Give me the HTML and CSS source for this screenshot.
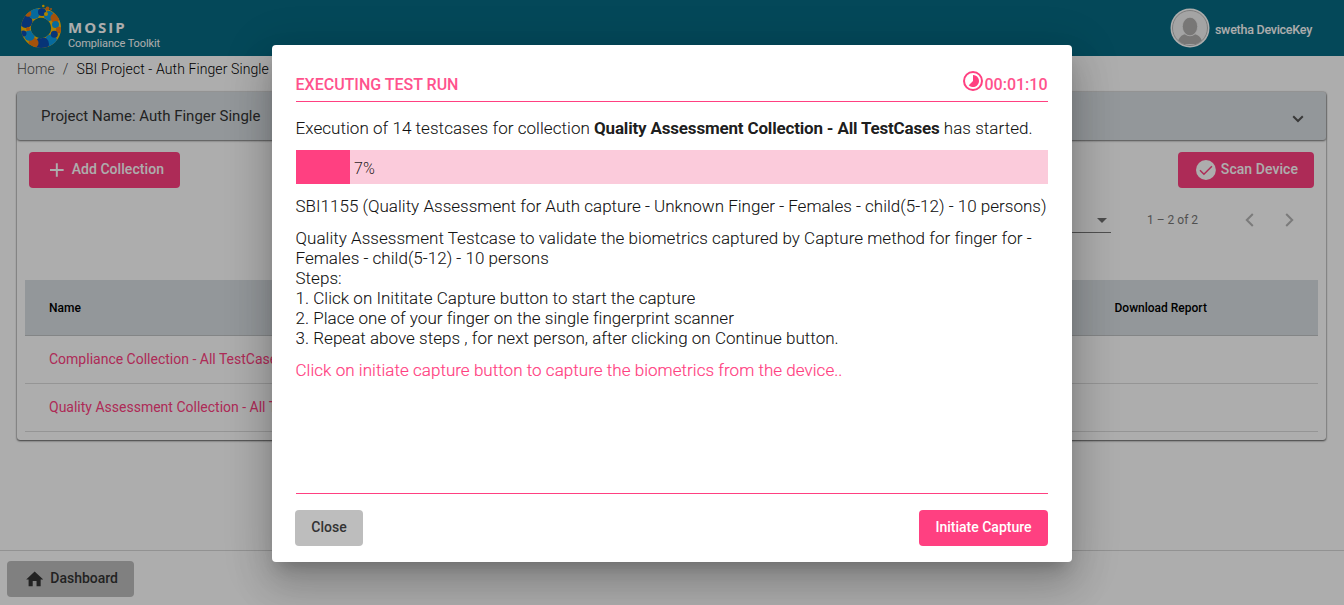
FILE: index.html
```html
<!DOCTYPE html>
<html lang="en">
<head>
<meta charset="utf-8">
<title>Compliance Toolkit</title>
<link rel="stylesheet" href="styles.css">
</head>
<body>
<div class="page">
  <header class="topbar">
    <div class="brand">
      <svg class="logo" width="42" height="46" viewBox="0 0 42 46">
        <defs><clipPath id="ring"><path clip-rule="evenodd" d="M20 4a20 20 0 1 0 .1 0zM20 13.800a10.200 10.200 0 1 1-.1 0z"/></clipPath></defs>
        <g clip-path="url(#ring)">
          <rect width="42" height="46" fill="#ffc000"/>
          <circle cx="5" cy="17.500" r="6.500" fill="#0b4db0"/>
          <circle cx="13" cy="9" r="6" fill="#0a9ce8"/>
          <circle cx="7" cy="9.500" r="3.200" fill="#f47a10"/>
          <circle cx="21" cy="8" r="4" fill="#0b4db0"/>
          <circle cx="28" cy="12" r="5" fill="#0a9ce8"/>
          <circle cx="34" cy="14" r="4.500" fill="#f47a10"/>
          <circle cx="34.500" cy="20.500" r="3.500" fill="#0a9ce8"/>
          <circle cx="30" cy="36.500" r="6" fill="#0a9ce8"/>
          <circle cx="21" cy="40" r="7" fill="#0b4db0"/>
          <circle cx="12.500" cy="39" r="5" fill="#f47a10"/>
          <circle cx="8.500" cy="31.500" r="5.300" fill="#0a9ce8"/>
          <circle cx="2.500" cy="29.500" r="3" fill="#0b4db0"/>
          <circle cx="38" cy="26" r="3.200" fill="#f47a10"/>
          <circle cx="7" cy="25" r="2" fill="#f47a10"/>
        </g>
        <circle cx="33.300" cy="30.300" r="3.500" fill="#0b4db0"/>
        <circle cx="26.500" cy="4.500" r="1.900" fill="#f47a10"/>
        <circle cx="22.300" cy="2" r="1.300" fill="#ffc000"/>
        <circle cx="30" cy="5" r="1" fill="#f47a10"/>
        <circle cx="25" cy="10" r="2" fill="#ffc000"/>
      </svg>
      <div class="brand-text">
        <span class="brand-name">MOSIP</span>
        <span class="brand-sub">Compliance Toolkit</span>
      </div>
    </div>
    <div class="user">
      <svg width="40" height="40" viewBox="0 0 40 40">
        <circle cx="20" cy="20" r="19.500" fill="#fff"/>
        <circle cx="20" cy="20" r="17.500" fill="#f2f2f2" stroke="#aaa" stroke-width=".8"/>
        <path d="M8.200 32.500C10 28 13 26.500 15 26.200c3 2.200 7 2.200 10 0 3 .5 5.500 2.500 6.800 6.300A17 17 0 0 1 26 36H14a17 17 0 0 1-5.800-3.500z" fill="#b2b0ae"/>
        <ellipse cx="20" cy="18.500" rx="7.700" ry="9.300" fill="#b2b0ae" stroke="#f2f2f2" stroke-width=".8"/>
      </svg>
      <span class="user-name">swetha DeviceKey</span>
    </div>
  </header>

  <nav class="crumbs"><a class="crumb-home">Home</a><span class="crumb-sep">/</span><span class="crumb-cur">SBI Project - Auth Finger Single</span></nav>

  <main class="card">
    <div class="panel-head">
      <span class="panel-title">Project Name: Auth Finger Single</span>
      <svg width="12" height="8" viewBox="0 0 12 8"><path d="M1.200 1.200 6 6l4.800-4.800" fill="none" stroke="#555" stroke-width="2"/></svg>
    </div>
    <div class="actions">
      <button class="btn pink add">
        <svg width="14" height="14" viewBox="0 0 14 14"><path d="M7 0v14M0 7h14" stroke="#fff" stroke-width="2"/></svg>
        <span>Add Collection</span>
      </button>
      <button class="btn pink scan">
        <svg width="20" height="20" viewBox="0 0 20 20"><circle cx="10" cy="10" r="10" fill="#fff"/><path d="M4 10.200 8 14.200 16 6.200" fill="none" stroke="#ff4081" stroke-width="1.500"/></svg>
        <span>Scan Device</span>
      </button>
    </div>
    <div class="paginator">
      <div class="page-size"><svg width="10" height="5" viewBox="0 0 10 5"><path d="M0 0h10L5 5z" fill="#707070"/></svg></div>
      <span class="range">1 – 2 of 2</span>
      <svg class="prev" width="9" height="14" viewBox="0 0 9 14"><path d="M7.800 1 1.800 7l6 6" fill="none" stroke="#b5b5b5" stroke-width="2"/></svg>
      <svg class="next" width="9" height="14" viewBox="0 0 9 14"><path d="M1.200 1l6 6-6 6" fill="none" stroke="#b5b5b5" stroke-width="2"/></svg>
    </div>
    <div class="table">
      <div class="thead"><span class="th">Name</span><span class="th">Download Report</span></div>
      <div class="row"><a class="link">Compliance Collection - All TestCases</a></div>
      <div class="row"><a class="link">Quality Assessment Collection - All TestCases</a></div>
    </div>
  </main>

  <footer class="footer">
    <button class="btn gray dash">
      <svg width="18" height="16" viewBox="0 0 18 16"><path d="M7 15.500v-5.300h4v5.300h4.300V8.400h2.500L9 .3.200 8.400h2.500v7.100z" fill="#333"/></svg>
      <span>Dashboard</span>
    </button>
  </footer>
</div>

<div class="overlay">
  <section class="dialog">
    <div class="dlg-head">
      <h1 class="dlg-title">EXECUTING TEST RUN</h1>
      <div class="timer">
        <svg width="20" height="20" viewBox="0 0 20 20"><circle cx="10" cy="10" r="9" fill="none" stroke="#ff4081" stroke-width="2"/><path d="M10 4v6l-4.240 4.240A6 6 0 1 0 10 4z" fill="#ff4081"/></svg>
        <span>00:01:10</span>
      </div>
    </div>
    <div class="dlg-body">
      <p class="text started">Execution of 14 testcases for collection <b>Quality Assessment Collection - All TestCases</b> has started.</p>
      <div class="progress"><div class="fill"></div><span class="pct">7%</span></div>
      <p class="text case">SBI1155 (Quality Assessment for Auth capture - Unknown Finger - Females - child(5-12) - 10 persons)</p>
      <p class="text desc">Quality Assessment Testcase to validate the biometrics captured by Capture method for finger for -<br>Females - child(5-12) - 10 persons<br>Steps:<br>1. Click on Inititate Capture button to start the capture<br>2. Place one of your finger on the single fingerprint scanner<br>3. Repeat above steps , for next person, after clicking on Continue button.</p>
      <p class="text hint">Click on initiate capture button to capture the biometrics from the device..</p>
    </div>
    <div class="dlg-actions">
      <button class="btn gray close">Close</button>
      <button class="btn pink initiate">Initiate Capture</button>
    </div>
  </section>
</div>
</body>
</html>
```
FILE: styles.css
```css
* { box-sizing: border-box; }
body { margin: 0; font-family: Roboto, sans-serif; overflow: hidden; }
.page { height: 605px; display: flex; flex-direction: column; background: #fff; }

.topbar { height: 56px; flex: none; background: #076b83; display: flex; justify-content: space-between; padding: 0 32px 0 21px; color: #fff; }
.brand { display: flex; gap: 5px; padding-top: 4px; }
.brand-text { display: flex; flex-direction: column; padding-top: 15px; }
.brand-name { font: 700 15px/17px "Open Sans", sans-serif; letter-spacing: 2px; }
.brand-sub { font-size: 11px; line-height: 15px; letter-spacing: -.1px; }
.user { display: flex; align-items: center; gap: 5px; }
.user svg { margin: 0 0 0 -1px; }
.user-name { font-size: 12.5px; font-weight: 500; padding-top: 3px; letter-spacing: -.26px; }

.crumbs { height: 36px; flex: none; padding: 5px 17px; font-size: 14px; line-height: 17px; display: flex; font-weight: 300; letter-spacing: .1px; }
.crumb-home { color: #555; }
.crumb-sep { margin: 0 8px; color: #444; }
.crumb-cur { color: #000; }

.card { margin: 0 17px; width: 1309px; height: 348px; flex: none; border-radius: 3px; box-shadow: 0 1px 2px rgba(0,0,0,.6), 0 0 2px rgba(0,0,0,.35); }
.panel-head { height: 48px; padding: 0 22px 0 24px; background: #d9dfe3; border-radius: 3px; display: flex; align-items: center; justify-content: space-between; box-shadow: 0 1px 2px rgba(0,0,0,.55); }
.panel-head svg { margin-top: 5px; }
.panel-title { font-size: 15px; color: #333; }
.actions { display: flex; justify-content: space-between; padding: 12px 12px 0 12px; }

.btn { height: 36px; border: 0; border-radius: 4px; padding: 0 16px; font: 500 14px/34px Roboto, sans-serif; display: flex; align-items: center; white-space: nowrap; }
.btn > span { line-height: 34px; height: 36px; }
.pink { background: #ff4081; color: #fff; }
.gray { background: #bdbdbd; color: #333; }
.add { width: 151px; padding-left: 21px; gap: 8px; letter-spacing: .06px; }
.scan { width: 136px; padding-left: 18px; gap: 5px; letter-spacing: .06px; }

.paginator { height: 92px; display: flex; justify-content: flex-end; padding: 19px 32px 0 0; }
.page-size { width: 60px; height: 26px; border-bottom: 1px solid #777; display: flex; justify-content: flex-end; padding: 11px 4px 0 0; }
.range { margin-left: 36px; width: 98px; font-size: 12px; line-height: 26px; color: #777; }
.prev { margin-top: 6px; }
.next { margin: 6px 0 0 31px; }

.table { margin: 0 8px; }
.thead { height: 56px; background: #d9dfe3; border-bottom: 1px solid #c2c4c6; display: grid; grid-template-columns: 1065.500px 1fr; align-items: center; padding-left: 24px; }
.th { font-size: 12px; font-weight: 500; color: #000; }
.row { height: 48px; border-bottom: 1px solid #dcdcdc; padding: 0 0 2px 24px; display: flex; align-items: center; font-size: 14px; }
.link { color: #ff4081; }

.footer { margin-top: auto; height: 55px; border-top: 1px solid #d8d8d8; padding: 10px 7px; }
.dash { width: 127px; padding-left: 19px; gap: 7px; }

.overlay { position: absolute; inset: 0; background: rgba(0,0,0,.32); display: flex; justify-content: center; padding-top: 45px; }
.dialog { width: 800px; height: 517px; background: #fff; border-radius: 4px; padding: 24px 24px 16px; display: flex; flex-direction: column; box-shadow: 0 11px 15px -7px rgba(0,0,0,.2), 0 24px 38px 3px rgba(0,0,0,.14), 0 9px 46px 8px rgba(0,0,0,.12); }
.dlg-head { height: 33px; flex: none; border-bottom: 1px solid #ff4081; display: flex; justify-content: space-between; color: #ff4081; }
.dlg-title { margin: 0 0 0 -.5px; font-size: 16px; font-weight: 500; line-height: 31px; }
.timer { display: flex; gap: 2px; font-size: 16px; font-weight: 500; line-height: 31px; padding-top: 2px; margin-right: .5px; }
.timer span { margin-top: -2px; }
.dlg-title, .timer span { opacity: .9; }
.dlg-body { flex: 1; border-bottom: 1px solid #ff4081; padding-top: 16px; }
.text { margin: 0 0 0 -.5px; font-size: 17px; line-height: 20px; font-weight: 300; color: rgba(0,0,0,.9); white-space: nowrap; -webkit-text-stroke: .15px; letter-spacing: .015px; }
.started { padding-top: 0; margin-bottom: 12px; letter-spacing: .05px; }
.text b { font-weight: 700; letter-spacing: -.18px; -webkit-text-stroke: 0; }
.progress { height: 34px; margin: 0 0 12px; background: #fbcbdb; display: flex; align-items: center; }
.fill { width: 54px; height: 34px; background: #ff4081; }
.pct { padding: 3px 0 0 4px; font-size: 16px; font-weight: 300; color: rgba(0,0,0,.87); }
.desc { margin-top: 12px; letter-spacing: .03px; }
.hint { margin-top: 12px; color: #ff4081; letter-spacing: .04px; }
.dlg-actions { display: flex; justify-content: space-between; padding-top: 16px; flex: none; margin-left: -1px; }
.dlg-actions .btn { display: block; line-height: 34px; padding-top: 0; padding-bottom: 2px; }
.close { width: 68px; }
.initiate { width: 129px; }
```
